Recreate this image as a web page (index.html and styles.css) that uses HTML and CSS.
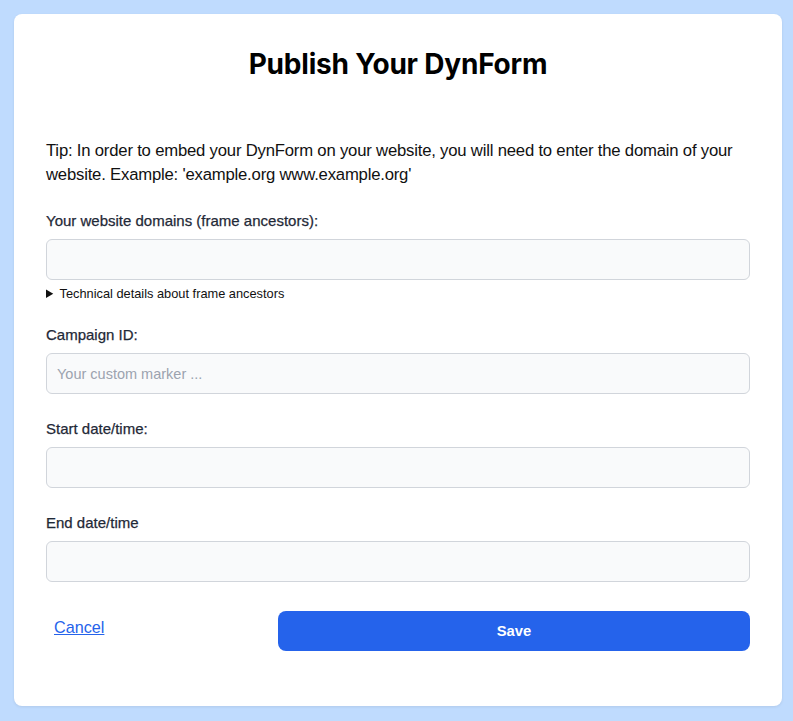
FILE: index.html
```html
<!DOCTYPE html>
<html lang="en">
<head>
<meta charset="utf-8">
<title>Publish Your DynForm</title>
<link rel="stylesheet" href="styles.css">
</head>
<body>
<div class="card">
  <h1 class="title">Publish Your DynForm</h1>
  <p class="tip">Tip: In order to embed your DynForm on your website, you will need to enter the domain of your website. Example: 'example.org www.example.org'</p>
  <div class="field field-first">
    <label class="label" for="domains">Your website domains (frame ancestors):</label>
    <input class="input" id="domains" type="text">
    <details class="details"><summary>Technical details about frame ancestors</summary></details>
  </div>
  <div class="field field-after-details">
    <label class="label" for="campaign">Campaign ID:</label>
    <input class="input" id="campaign" type="text" placeholder="Your custom marker ...">
  </div>
  <div class="field">
    <label class="label" for="start">Start date/time:</label>
    <input class="input" id="start" type="text">
  </div>
  <div class="field">
    <label class="label" for="end">End date/time</label>
    <input class="input" id="end" type="text">
  </div>
  <div class="actions">
    <a class="cancel" href="#">Cancel</a>
    <button class="save" type="button">Save</button>
  </div>
</div>
</body>
</html>
```
FILE: styles.css
```css
html, body {
  margin: 0;
  padding: 0;
}
body {
  background: #bfdbfe;
  font-family: "Liberation Sans", Arial, sans-serif;
  color: #111827;
  padding: 14px 0 14px 14px;
}
.card {
  box-sizing: border-box;
  width: 768px;
  height: 692px;
  background: #ffffff;
  border-radius: 8px;
  padding: 32px 32px;
  box-shadow: 0 1px 3px rgba(0,0,0,0.08);
}
.title {
  margin: 0;
  text-align: center;
  font-family: Inter, "Liberation Sans", sans-serif;
  font-size: 28px;
  line-height: 36px;
  font-weight: 700;
  color: #000;
  letter-spacing: -0.2px;
}
.tip {
  margin: 57px 0 0;
  font-size: 16.7px;
  line-height: 24px;
  letter-spacing: -0.2px;
  color: #111;
}
.field {
  margin-top: 25px;
}
.field-first {
  margin-top: 24px;
}
.field-after-details {
  margin-top: 22px;
}
.label {
  display: block;
  font-size: 15px;
  line-height: 20px;
  font-weight: 500;
  color: #1f2937;
  margin-bottom: 8px;
  -webkit-text-stroke: 0.25px #1f2937;
}
.input {
  display: block;
  box-sizing: border-box;
  width: 100%;
  height: 41px;
  margin: 0;
  border: 1px solid #d1d5db;
  border-radius: 6px;
  background: #f9fafb;
  padding: 0 10px;
  font-family: inherit;
  font-size: 14.5px;
  color: #111827;
}
.input::placeholder {
  color: #9ca3af;
}
.details {
  margin-top: 5px;
  font-size: 12.8px;
  line-height: 18px;
  color: #111;
}
.details summary {
  cursor: pointer;
}
.actions {
  display: grid;
  grid-template-columns: 232px 1fr;
  align-items: start;
  margin-top: 29px;
}
.cancel {
  margin: 5px 0 0 8px;
  font-size: 16.2px;
  line-height: 22px;
  color: #2563eb;
  text-decoration: underline;
  justify-self: start;
}
.save {
  height: 40px;
  border: none;
  border-radius: 8px;
  background: #2563eb;
  color: #fff;
  font-family: inherit;
  font-size: 14.8px;
  font-weight: 700;
}
```
